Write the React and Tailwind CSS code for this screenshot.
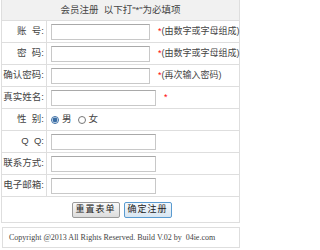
import { useState } from "react";

const cjk = { fontFamily: '"Liberation Sans", "Noto Sans CJK SC", sans-serif' };

function Row({ label, children, h = "h-[22px]" }) {
  return (
    <div className={`flex ${h} border-t border-[#dedede]`}>
      <div className="w-[45px] shrink-0 border-r border-[#dedede] flex items-center justify-end pr-[2px] text-[9.5px] text-[#444] whitespace-pre">
        {label}
      </div>
      <div className="flex-1 flex items-center pl-[4px]">{children}</div>
    </div>
  );
}

function Field({ w = "w-[99px]", type = "text" }) {
  return (
    <input
      type={type}
      className={`${w} h-[16px] border border-[#c8c8c8] border-t-[#a9a9a9] bg-white outline-none`}
    />
  );
}

function Hint({ text }) {
  return (
    <span className="ml-[8px] text-[9px] text-[#444] whitespace-nowrap">
      <span className="text-[#f00]">*</span>
      {text}
    </span>
  );
}

export default function App() {
  const [sex, setSex] = useState("m");

  return (
    <div className="w-[241px] h-[250px] bg-white overflow-hidden" style={cjk}>
      <div className="ml-[1px] w-[239px] border-x border-b border-[#dedede]">
        <div className="h-[20px] bg-[#f1f1f1] flex items-center justify-center text-[9.5px] text-[#444] whitespace-pre">
          会员注册  以下打"*"为必填项
        </div>
        <Row label={"账  号:"}>
          <Field />
          <Hint text="(由数字或字母组成)" />
        </Row>
        <Row label={"密  码:"}>
          <Field type="password" />
          <Hint text="(由数字或字母组成)" />
        </Row>
        <Row label="确认密码:">
          <Field type="password" />
          <Hint text="(再次输入密码)" />
        </Row>
        <Row label="真实姓名:">
          <Field w="w-[105px]" />
          <span className="ml-[8px] text-[9px] text-[#f00]">*</span>
        </Row>
        <Row label={"性  别:"}>
          <label className="flex items-center text-[9.5px] text-[#444]">
            <input
              type="radio"
              name="sex"
              checked={sex === "m"}
              onChange={() => setSex("m")}
              className="w-[8px] h-[8px] m-0 mr-[3px] accent-[#3b6ea5]"
            />
            男
          </label>
          <label className="flex items-center text-[9.5px] text-[#444] ml-[6px]">
            <input
              type="radio"
              name="sex"
              checked={sex === "f"}
              onChange={() => setSex("f")}
              className="w-[8px] h-[8px] m-0 mr-[3px] accent-[#3b6ea5]"
            />
            女
          </label>
        </Row>
        <Row label={"Q  Q:"}>
          <Field w="w-[105px]" />
        </Row>
        <Row label="联系方式:">
          <Field w="w-[105px]" />
        </Row>
        <Row label="电子邮箱:">
          <Field w="w-[105px]" />
        </Row>
        <div className="h-[26px] border-t border-[#dedede] flex items-center justify-center gap-[4px] pl-[2px]">
          <button className="w-[48px] h-[16px] border border-[#9a9a9a] rounded-[2px] bg-gradient-to-b from-[#fafafa] to-[#dcdcdc] text-[9px] text-[#222] leading-none tracking-[1px] whitespace-nowrap">
            重置表单
          </button>
          <button className="w-[48px] h-[16px] border border-[#5a9bd0] rounded-[2px] bg-gradient-to-b from-[#f4f9fd] to-[#d8e6f2] text-[9px] text-[#222] leading-none tracking-[1px] whitespace-nowrap">
            确定注册
          </button>
        </div>
      </div>
      <div
        className="ml-[2px] mt-[4px] w-[238px] h-[21px] border border-[#dedede] flex items-center pl-[6px] text-[8px] text-[#444] whitespace-pre"
        style={{ fontFamily: '"Liberation Serif", serif' }}
      >
        Copyright @2013 All Rights Reserved. Build V.02 by  04ie.com
      </div>
    </div>
  );
}
